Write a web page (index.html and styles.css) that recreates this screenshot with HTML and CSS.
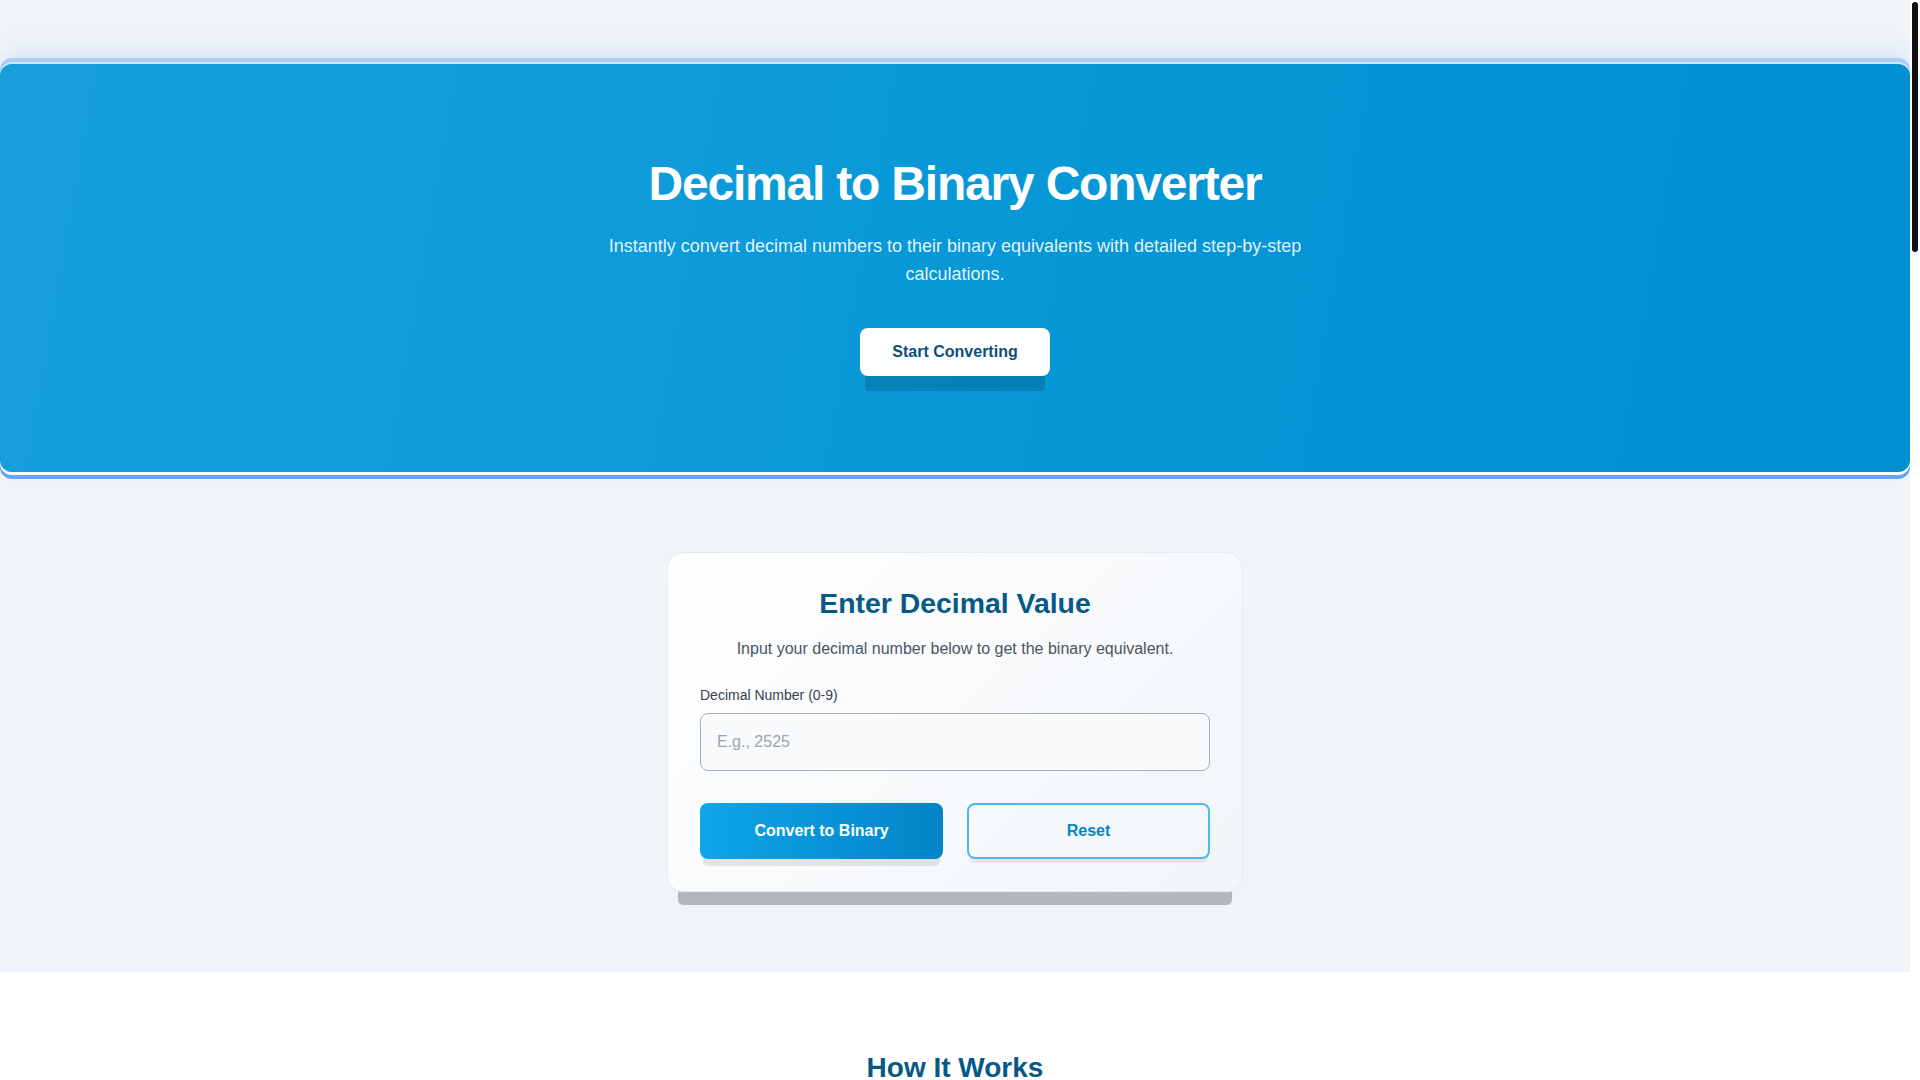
FILE: index.html
```html
<!DOCTYPE html>
<html lang="en">
<head>
<meta charset="utf-8">
<title>Decimal to Binary Converter</title>
<link rel="stylesheet" href="styles.css">
</head>
<body>
<main class="page">
  <section class="hero">
    <h1 class="hero-title">Decimal to Binary Converter</h1>
    <p class="hero-sub">Instantly convert decimal numbers to their binary equivalents with detailed step-by-step calculations.</p>
    <a class="hero-btn" href="#converter">Start Converting</a>
  </section>

  <section class="converter" id="converter">
    <div class="card">
      <h2 class="card-title">Enter Decimal Value</h2>
      <p class="card-sub">Input your decimal number below to get the binary equivalent.</p>
      <label class="field-label" for="dec">Decimal Number (0-9)</label>
      <input class="field-input" id="dec" type="text" placeholder="E.g., 2525">
      <div class="actions">
        <button class="btn-primary" type="button">Convert to Binary</button>
        <button class="btn-outline" type="button">Reset</button>
      </div>
    </div>
  </section>

  <section class="how">
    <h2 class="section-title">How It Works</h2>
    <div class="steps">
      <div class="step">
        <div class="step-num">1</div>
        <h3 class="step-title">Divide by 2</h3>
        <p class="step-text">Divide the decimal number by 2 and note the quotient and the remainder.</p>
      </div>
      <div class="step">
        <div class="step-num">2</div>
        <h3 class="step-title">Repeat</h3>
        <p class="step-text">Keep dividing the quotient by 2 until the quotient becomes 0.</p>
      </div>
      <div class="step">
        <div class="step-num">3</div>
        <h3 class="step-title">Read Remainders</h3>
        <p class="step-text">Read the remainders from bottom to top to get the binary number.</p>
      </div>
    </div>
  </section>

  <section class="examples">
    <h2 class="section-title">Common Conversions</h2>
    <div class="table">
      <div class="row head"><span>Decimal</span><span>Binary</span></div>
      <div class="row"><span>0</span><span>0</span></div>
      <div class="row"><span>1</span><span>1</span></div>
      <div class="row"><span>2</span><span>10</span></div>
      <div class="row"><span>3</span><span>11</span></div>
      <div class="row"><span>4</span><span>100</span></div>
      <div class="row"><span>5</span><span>101</span></div>
      <div class="row"><span>6</span><span>110</span></div>
      <div class="row"><span>7</span><span>111</span></div>
      <div class="row"><span>8</span><span>1000</span></div>
      <div class="row"><span>9</span><span>1001</span></div>
    </div>
  </section>

  <section class="faq">
    <h2 class="section-title">Frequently Asked Questions</h2>
    <div class="faq-item">
      <h3 class="faq-q">What is a binary number?</h3>
      <p class="faq-a">A binary number is expressed in the base-2 numeral system, using only the digits 0 and 1.</p>
    </div>
    <div class="faq-item">
      <h3 class="faq-q">Why convert decimal to binary?</h3>
      <p class="faq-a">Computers store and process all data in binary, so conversion helps understand how numbers are represented.</p>
    </div>
  </section>

  <footer class="footer">
    <p>© 2024 Decimal to Binary Converter. All rights reserved.</p>
  </footer>
</main>
<div class="scrollbar" aria-hidden="true"><div class="scrollbar-thumb"></div></div>
</body>
</html>
```

FILE: styles.css
```css
html, body {
  margin: 0;
  padding: 0;
}

body {
  background: #f0f4f8;
  font-family: "Liberation Sans", Arial, sans-serif;
  color: #1f2937;
}

.page {
  display: block;
  margin-right: 10px;
  padding-top: 64px;
}

/* fake overlay scrollbar */
.scrollbar {
  position: fixed;
  top: 0;
  right: 0;
  width: 10px;
  height: 100vh;
  background: #ffffff;
  z-index: 10;
}

.scrollbar-thumb {
  margin: 2px 2px 0;
  height: 250px;
  background: #111111;
  border-radius: 3px;
}

/* HERO */
.hero {
  display: flex;
  flex-direction: column;
  align-items: center;
  text-align: center;
  padding: 96px 24px;
  border-radius: 12px;
  background: linear-gradient(100deg, #179fdd 0%, #0e9bd9 35%, #0596d6 60%, #0090d1 100%);
  box-shadow:
    0 3px 0 #ffffff,
    0 7px 0 #60a5fa,
    0 -2px 0 #d3e5fc,
    0 -6px 0 #a8cdfa,
    0 -12px 22px rgba(96, 165, 250, 0.18);
}

.hero-title {
  margin: 0 0 24px;
  font-size: 48px;
  line-height: 48px;
  font-weight: 700;
  letter-spacing: -1.2px;
  color: #ffffff;
}

.hero-sub {
  margin: 0 0 40px;
  max-width: 768px;
  font-size: 18px;
  line-height: 28px;
  color: rgba(255, 255, 255, 0.9);
}

.hero-btn {
  display: block;
  padding: 12px 32px;
  font-size: 16px;
  line-height: 24px;
  font-weight: 700;
  color: #0b4f7c;
  background: #ffffff;
  border-radius: 8px;
  text-decoration: none;
  box-shadow: 0 20px 0 -5px rgba(0, 0, 0, 0.15);
}

/* CONVERTER */
.converter {
  padding: 80px 24px;
}

.card {
  box-sizing: border-box;
  max-width: 576px;
  margin: 0 auto;
  padding: 32px;
  border: 1px solid #e6ebf1;
  border-radius: 16px;
  background: linear-gradient(135deg, #ffffff 0%, #f1f5f9 100%);
  box-shadow: 0 24px 0 -11px rgba(0, 0, 0, 0.25);
}

.card-title {
  margin: 0 0 16px;
  text-align: center;
  font-size: 28.4px;
  line-height: 36px;
  font-weight: 700;
  color: #075985;
}

.card-sub {
  margin: 0 0 24px;
  text-align: center;
  font-size: 16px;
  line-height: 24px;
  color: #4b5563;
}

.field-label {
  display: block;
  margin-bottom: 8px;
  font-size: 14px;
  line-height: 20px;
  color: #374151;
}

.field-input {
  display: block;
  box-sizing: border-box;
  width: 100%;
  height: 58px;
  padding: 16px;
  font-family: "Liberation Sans", Arial, sans-serif;
  font-size: 16px;
  line-height: 24px;
  color: #1f2937;
  background: #f8fafc;
  border: 1px solid #a3b0c2;
  border-radius: 8px;
  outline: none;
}

.field-input::placeholder {
  color: #9ca3af;
}

.actions {
  display: grid;
  grid-template-columns: 1fr 1fr;
  gap: 24px;
  margin-top: 32px;
}

.btn-primary,
.btn-outline {
  height: 56px;
  font-family: "Liberation Sans", Arial, sans-serif;
  font-size: 16px;
  font-weight: 700;
  border-radius: 8px;
  cursor: pointer;
}

.btn-primary {
  border: none;
  color: #ffffff;
  background: linear-gradient(90deg, #0ea5e9 0%, #0284c7 100%);
  box-shadow: 0 10px 0 -3px rgba(0, 0, 0, 0.09);
}

.btn-outline {
  color: #0284c7;
  background: transparent;
  border: 2px solid #4fb9ee;
  box-shadow: 0 6px 0 -2px rgba(0, 0, 0, 0.07);
}

/* HOW IT WORKS */
.how {
  background: #ffffff;
  padding: 80px 24px;
  min-height: 940px;
}

.section-title {
  margin: 0 0 48px;
  text-align: center;
  font-size: 28px;
  line-height: 32px;
  font-weight: 700;
  color: #075985;
}

.steps {
  display: grid;
  grid-template-columns: repeat(3, 1fr);
  gap: 32px;
  max-width: 1152px;
  margin: 0 auto;
}

.step {
  padding: 32px;
  border-radius: 16px;
  background: #f8fafc;
  border: 1px solid #e2e8f0;
  text-align: center;
}

.step-num {
  width: 48px;
  height: 48px;
  margin: 0 auto 16px;
  border-radius: 50%;
  background: #0ea5e9;
  color: #ffffff;
  font-weight: 700;
  font-size: 20px;
  line-height: 48px;
}

.step-title {
  margin: 0 0 8px;
  font-size: 20px;
  color: #075985;
}

.step-text {
  margin: 0;
  font-size: 16px;
  line-height: 24px;
  color: #4b5563;
}

/* EXAMPLES */
.examples {
  padding: 80px 24px;
  min-height: 1140px;
}

.table {
  max-width: 576px;
  margin: 0 auto;
  background: #ffffff;
  border-radius: 12px;
  overflow: hidden;
  border: 1px solid #e2e8f0;
}

.row {
  display: grid;
  grid-template-columns: 1fr 1fr;
  padding: 14px 24px;
  border-top: 1px solid #e2e8f0;
  font-size: 16px;
  color: #374151;
}

.row.head {
  border-top: none;
  background: #0284c7;
  color: #ffffff;
  font-weight: 700;
}

/* FAQ */
.faq {
  background: #ffffff;
  padding: 80px 24px;
  min-height: 740px;
}

.faq-item {
  max-width: 768px;
  margin: 0 auto 24px;
  padding: 24px;
  border-radius: 12px;
  background: #f8fafc;
  border: 1px solid #e2e8f0;
}

.faq-q {
  margin: 0 0 8px;
  font-size: 18px;
  color: #075985;
}

.faq-a {
  margin: 0;
  font-size: 16px;
  line-height: 24px;
  color: #4b5563;
}

/* FOOTER */
.footer {
  min-height: 388px;
  box-sizing: border-box;
  padding: 48px 24px;
  background: #0c4a6e;
  color: #e0f2fe;
  text-align: center;
  font-size: 14px;
}

.footer p {
  margin: 0;
}
```
